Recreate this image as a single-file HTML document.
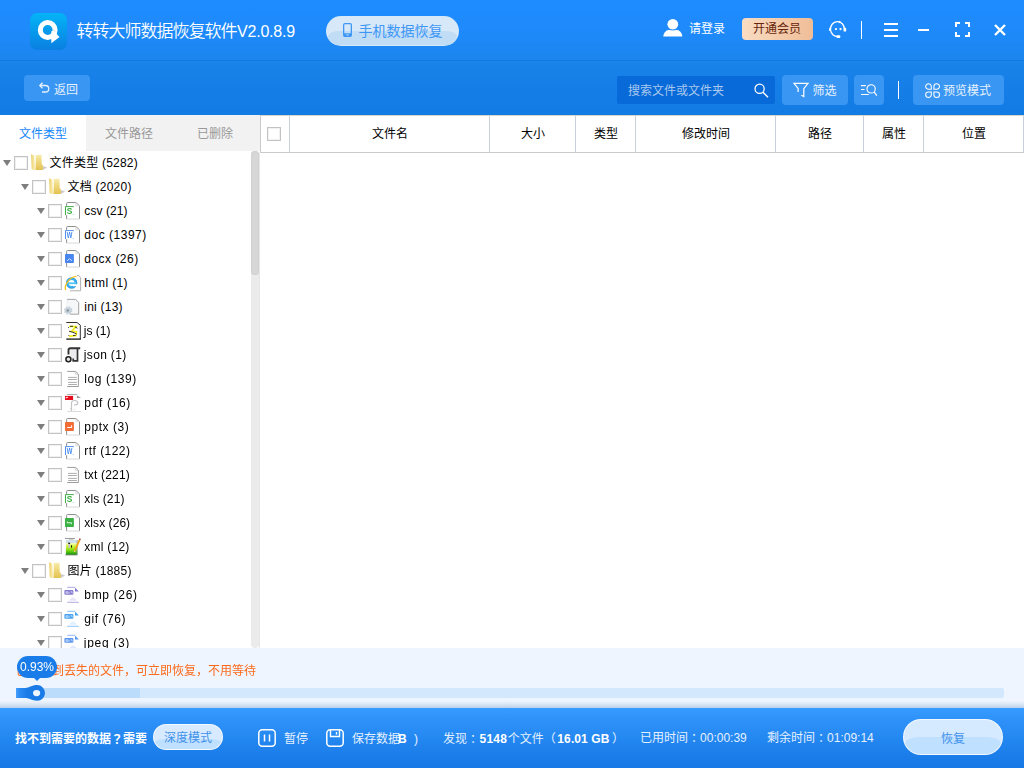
<!DOCTYPE html>
<html lang="zh-CN">
<head>
<meta charset="utf-8">
<title>转转大师数据恢复软件</title>
<style>
*{box-sizing:border-box;margin:0;padding:0}
html,body{width:1024px;height:768px;overflow:hidden;background:#fff}
body{font-family:"Liberation Sans","Noto Sans CJK SC",sans-serif;font-size:12px;color:#000;position:relative}
.abs{position:absolute}
.jp{font-family:"Liberation Sans","Noto Sans CJK JP",sans-serif;position:relative;top:1px}
svg{position:absolute;overflow:visible}
.t{position:absolute;white-space:nowrap;line-height:20px;height:20px;margin-top:1px}
#hdr{left:0;top:0;width:1024px;height:115px;background:linear-gradient(#1e8bff 0,#1e8afb 30px,#1c86ee 59px,#1a83ea 63px,#157fe7 85px,#127ce4 115px)}
#hline{left:0;top:60px;width:1024px;height:1px;background:#117be2}
#logo{left:30px;top:13px;width:37px;height:37px;border-radius:7px;background:linear-gradient(#04b4f6,#0a7fe2)}
#title{left:77px;top:20px;font-size:16px;color:#fff;line-height:22px;height:22px}
#pill{left:326px;top:16px;width:133px;height:30px;border-radius:15px;background:#d7e8f8;overflow:hidden}
#pill i{position:absolute;left:2px;top:15px;width:129px;height:14px;border-radius:14px 14px 12px 12px/8px 8px 12px 12px;background:#c1ddf6}
#pilltx{left:358.500px;top:20px;font-size:14px;color:#3f97f5}
#login{left:689px;top:18px;color:#fff}
#vip{left:742px;top:18px;width:71px;height:22px;border-radius:4px;background:linear-gradient(90deg,#f8dcc2,#f0bd98);color:#66240c;text-align:center;line-height:23px;padding-right:1px}
.sep{position:absolute;width:1px;background:#fff}
.btn{position:absolute;background:#3a96f3;border-radius:4px;height:30px;top:75px}
.btn .t{color:#e6f1fd;top:5px}
#search{left:617px;top:76px;width:158px;height:28px;background:#0869d8;border-radius:2px}
#search .t{left:11px;top:4px;color:#a8c8ee}
#tabs{left:0;top:115px;width:260px;height:36px;background:#f2f2f2}
#tab1{left:0;top:115px;width:86px;height:36px;background:#fff}
.tab{top:123px;width:86px;text-align:center;color:#999}
#thead{left:260px;top:115px;width:764px;height:38px;border-left:1px solid #cacaca;border-bottom:1px solid #cacaca;box-shadow:inset 0 1px 0 #d8d4ce}
.th{position:absolute;top:0;height:37px;border-right:1px solid #c8d0dc;text-align:center;line-height:39px;font-size:12px;color:#000;text-indent:1px}
.cb{position:absolute;width:14px;height:14px;border:1px solid #c3c3c3;background:#fff;box-shadow:inset 0 0 0 1px #f0f0f0}
#sbt{left:251px;top:151px;width:8px;height:497px;background:#ebebeb;border-radius:4px}
#vline{left:259px;top:153px;width:1px;height:495px;background:#e6e6e6}
#sbh{left:251px;top:151px;width:8px;height:124px;background:#d7d7d7;border-radius:4px;box-shadow:inset 0 0 0 1px #d2d2d2}
#tree{left:0;top:150px;width:250px;height:498px;overflow:hidden}
.row{position:absolute;left:0;height:24px;width:250px}
.row .ar{position:absolute;top:10px;width:0;height:0;border-left:4.500px solid transparent;border-right:4.500px solid transparent;border-top:6px solid #7e7e7e}
.row .cb{top:6px}
.row svg{top:4px}
.row .tx{position:absolute;top:3px;line-height:20px;white-space:nowrap;font-size:12px}
#info{left:0;top:648px;width:1024px;height:60px;background:#eef5fe}
#shadow{left:0;top:701px;width:1024px;height:7px;background:linear-gradient(rgba(100,140,190,0),rgba(100,140,190,.12) 40%,rgba(100,140,190,.36))}
#foot{left:0;top:708px;width:1024px;height:60px;background:linear-gradient(#379cff 0,#2d91f9 12px,#2488f1 30px,#1b7de9 48px,#1678e5 60px)}
#foot .t{color:#e4f0ff}
#foot b{color:#fff}
#msg{left:16px;top:660px;color:#fb6a1c}
#pbar{left:16px;top:688px;width:988px;height:10px;background:#d4e8fd;border-radius:0 2px 2px 0}
#pbar2{left:16px;top:688px;width:124px;height:10px;background:#bcdcfb}
#pbar3{left:16px;top:688px;width:22px;height:10px;background:linear-gradient(90deg,#2f8ef6,#1a78e4)}
#knob{left:28px;top:685px;width:17px;height:16px;border-radius:50%;background:#1a7ae6}
#knob i{position:absolute;left:5px;top:5px;width:6.500px;height:5.600px;border-radius:50%;background:#eef5fe}
#tip{left:17px;top:656px;width:40px;height:22px;border-radius:11px;background:#1a7ce8;color:#fff;text-align:center;line-height:22px}
#tipar{left:33.500px;top:677.500px;width:0;height:0;border-left:3.500px solid transparent;border-right:3.500px solid transparent;border-top:3.500px solid #1a7ce8}
#deep{left:153px;top:724px;width:70px;height:26px;border-radius:13px;background:#d8eaff;overflow:hidden;text-align:center;line-height:26px;border:1px solid rgba(255,255,255,.75)}
#rec{left:903px;top:719px;width:100px;height:36px;border-radius:18px;background:#d6eaff;overflow:hidden;border:1px solid rgba(255,255,255,.7)}
#rec i,#deep i{position:absolute;left:1px;right:1px;top:17px;bottom:0;border-radius:24px 24px 17px 17px/11px 11px 17px 17px;background:#bfe0ff}
#deep i{top:14px;left:0;right:0;border-radius:26px 26px 13px 13px/10px 10px 13px 13px}
#rec span,#deep span{position:absolute;left:0;right:0;top:0;color:#3f92ea}
#rec span{line-height:38px;text-align:center}
</style>
</head>
<body>

<div id="hdr" class="abs"></div>
<div id="hline" class="abs"></div>
<div id="logo" class="abs"><svg width="37" height="37" viewBox="0 0 37 37" style="left:0;top:0"><circle cx="17.700" cy="17" r="7.400" fill="none" stroke="#fff" stroke-width="5"/><path d="M21.300 18.200l2.200-.4 6 6.200-8.200 6.200z" fill="#fff"/><path d="M23.200 15.500l3.300 4.300-3-1.800z" fill="#cfd6dc" opacity=".7"/></svg></div>
<div id="title" class="t"><span style="font-size:17px;letter-spacing:-1px;font-weight:350;margin-left:-.5px">转转大师数据恢复软件</span><span style="margin-left:.5px;letter-spacing:-.2px">V2.0.8.9</span></div>
<div id="pill" class="abs"><i></i></div>
<svg width="9" height="14" viewBox="0 0 9 14" style="left:343.300px;top:23px"><rect x="0.650" y="0.650" width="7.700" height="12.700" rx="1.300" fill="none" stroke="#3f97f5" stroke-width="1.300"/><rect x="0.800" y="10.300" width="7.400" height="3" fill="#3f97f5"/><rect x="3.500" y="11.400" width="2" height="1" fill="#d9e8f8"/></svg>
<div id="pilltx" class="t">手机数据恢复</div>
<svg width="20" height="18" viewBox="0 0 20 18" style="left:662.700px;top:18.700px"><circle cx="9.800" cy="5.300" r="5.400" fill="#fff"/><path d="M0.200 17.400c.3-3.600 2.600-6 5.600-6.600h8c3 .6 5.300 3 5.600 6.600z" fill="#fff"/><path d="M4.500 10.300q5.300 1.400 10.600 0" stroke="#2088fe" stroke-width=".9" fill="none"/></svg>
<div id="login" class="t">请登录</div>
<div id="vip" class="abs">开通会员</div>
<svg width="19" height="19" viewBox="0 0 19 19" style="left:828px;top:20px"><path d="M16.450 9.050A7 7.400 0 1 0 10.500 16.370" fill="none" stroke="#fff" stroke-width="1.350"/><path d="M11 2.900L12.100 1.200" stroke="#fff" stroke-width="1.300"/><circle cx="7.960" cy="9.050" r="1.150" fill="#fff"/><circle cx="12.500" cy="9.050" r="1.150" fill="#fff"/><rect x="15.500" y="7.750" width="2.700" height="3.800" rx=".9" fill="#fff"/><rect x="8.600" y="15.250" width="3.700" height="2.750" rx=".8" fill="#fff"/><rect x="1.100" y="8.100" width="1.500" height="3" rx=".6" fill="#fff"/></svg>
<div class="sep" style="left:861px;top:21px;height:18px"></div>
<svg width="14" height="14" viewBox="0 0 14 14" style="left:884px;top:23px"><path d="M0 1h14M0 7h14M0 13h14" stroke="#fff" stroke-width="2"/></svg>
<div class="abs" style="left:918px;top:29px;width:11px;height:2px;background:#fff"></div>
<svg width="15" height="15" viewBox="0 0 15 15" style="left:955px;top:22px"><path d="M1 5V1h4M10 1h4v4M14 10v4h-4M5 14H1v-4" fill="none" stroke="#fff" stroke-width="2"/></svg>
<svg width="12" height="12" viewBox="0 0 12 12" style="left:994px;top:24px"><path d="M1 1l10 10M11 1L1 11" stroke="#fff" stroke-width="2.400"/></svg>


<div class="btn" style="left:24px;top:75px;width:66px;height:26px"><svg width="11" height="11" viewBox="0 0 11 11" style="left:15px;top:7px"><path d="M1 3.500h5.500a3.200 3.200 0 0 1 0 6.500H3" fill="none" stroke="#e6f1fd" stroke-width="1.300"/><path d="M3.500 0.800L0.800 3.500l2.700 2.700" fill="none" stroke="#e6f1fd" stroke-width="1.300"/></svg><div class="t" style="left:30px;top:4px">返回</div></div>
<div id="search" class="abs"><div class="t">搜索文件或文件夹</div><svg width="15" height="15" viewBox="0 0 15 15" style="left:136.500px;top:6.500px"><circle cx="5.600" cy="5.800" r="4.600" fill="none" stroke="#fff" stroke-width="1.250"/><path d="M9 9.200l5 5" stroke="#fff" stroke-width="1.400"/></svg></div>
<div class="btn" style="left:782px;width:66px"><svg width="16" height="15" viewBox="0 0 16 15" style="left:11px;top:7px"><path d="M5.100 9.900V6.400L1 1.300h14L10.800 6.700v7.900L8.300 13.200" fill="none" stroke="#fff" stroke-width="1.200" stroke-linejoin="miter"/></svg><div class="t" style="left:30.500px">筛选</div></div>
<div class="btn" style="left:854px;width:30px"><svg width="17" height="13" viewBox="0 0 17 13" style="left:7px;top:9px"><path d="M0 1.600h4.800M0 5.500h3.500M0 10.500h7.800" stroke="#fff" stroke-width="1.100"/><circle cx="10.100" cy="4.900" r="4.150" fill="none" stroke="#fff" stroke-width="1.100"/><path d="M13 7.900l2.900 3.700" stroke="#fff" stroke-width="1.200"/></svg></div>
<div class="sep" style="left:898px;top:81px;height:18px"></div>
<div class="btn" style="left:913px;width:91px"><svg width="15" height="15" viewBox="0 0 15 15" style="left:11.700px;top:8px"><g fill="none" stroke="#fff" stroke-width="1.050"><path d="M6.300 6.300H3.500A2.800 2.800 0 1 1 6.300 3.500z"/><path d="M8.900 6.300h2.800A2.800 2.800 0 1 0 8.900 3.500z"/><path d="M6.300 8.900H3.500A2.800 2.800 0 1 0 6.300 11.700z"/><path d="M8.900 8.900h2.800A2.800 2.800 0 1 1 8.900 11.700z"/></g></svg><div class="t" style="left:30px">预览模式</div></div>


<div id="tabs" class="abs"></div>
<div id="tab1" class="abs"></div>
<div class="t tab" style="left:0;color:#1787fb">文件类型</div>
<div class="t tab" style="left:86px">文件路径</div>
<div class="t tab" style="left:172px">已删除</div>
<div id="thead" class="abs"><div class="th" style="left:0px;width:29px"></div><div class="th" style="left:29px;width:200px">文件名</div><div class="th" style="left:229px;width:86px">大小</div><div class="th" style="left:315px;width:60px">类型</div><div class="th" style="left:375px;width:140px">修改时间</div><div class="th" style="left:515px;width:88px">路径</div><div class="th" style="left:603px;width:60px">属性</div><div class="th" style="left:663px;width:100px">位置</div><span class="cb" style="left:6px;top:12px"></span></div>
<div id="tree" class="abs">
<div class="row" style="top:0px"><span class="ar" style="left:3px"></span><span class="cb" style="left:14px"></span><svg width="18" height="18" viewBox="0 0 18 18" style="left:30px"><defs><linearGradient id="fa0" x1="0" y1="0" x2="1" y2="0"><stop offset="0" stop-color="#ebd070"/><stop offset=".6" stop-color="#f6e59a"/><stop offset="1" stop-color="#fdf6d2"/></linearGradient><linearGradient id="fb0" x1="0" y1="0" x2="0" y2="1"><stop offset="0" stop-color="#f7ecae"/><stop offset=".45" stop-color="#efd87c"/><stop offset="1" stop-color="#e3c252"/></linearGradient></defs><g transform="translate(0 -.5) scale(1 1.070)"><path d="M12.800 11.600L17.200 13.200 12.800 15.400z" fill="#808080" opacity=".4"/><path d="M5.300 1.700Q8.500.800 11.500 1.200L11.800 10.400H12.900V15.400H5.300z" fill="url(#fb0)"/><path d="M4 2.200L5.600 1.900V14.500z" fill="#fffef6"/><path d="M1 .400L4.100 2.200 5.500 16 1.700 14.800z" fill="url(#fa0)"/></g></svg><span class="tx" style="left:49.5px;letter-spacing:0.22px">文件类型 (5282)</span></div>
<div class="row" style="top:24px"><span class="ar" style="left:21px"></span><span class="cb" style="left:32px"></span><svg width="18" height="18" viewBox="0 0 18 18" style="left:48px"><defs><linearGradient id="fa1" x1="0" y1="0" x2="1" y2="0"><stop offset="0" stop-color="#ebd070"/><stop offset=".6" stop-color="#f6e59a"/><stop offset="1" stop-color="#fdf6d2"/></linearGradient><linearGradient id="fb1" x1="0" y1="0" x2="0" y2="1"><stop offset="0" stop-color="#f7ecae"/><stop offset=".45" stop-color="#efd87c"/><stop offset="1" stop-color="#e3c252"/></linearGradient></defs><g transform="translate(0 -.5) scale(1 1.070)"><path d="M12.800 11.600L17.200 13.200 12.800 15.400z" fill="#808080" opacity=".4"/><path d="M5.300 1.700Q8.500.800 11.500 1.200L11.800 10.400H12.900V15.400H5.300z" fill="url(#fb1)"/><path d="M4 2.200L5.600 1.900V14.500z" fill="#fffef6"/><path d="M1 .400L4.100 2.200 5.500 16 1.700 14.800z" fill="url(#fa1)"/></g></svg><span class="tx" style="left:67.5px;letter-spacing:0.24px">文档 (2020)</span></div>
<div class="row" style="top:48px"><span class="ar" style="left:37px"></span><span class="cb" style="left:48px"></span><svg width="18" height="18" viewBox="0 0 18 18" style="left:64px;will-change:transform"><path d="M2.600 16.900V1.500Q2.600.500 3.600.500H11.800L15.500 3.800V16.900" fill="#fff" stroke="#8e8e8e" stroke-width="1" stroke-linejoin="round"/><path d="M2.600 17.100H15.500" stroke="#d0d0d0" stroke-width=".8"/><path d="M11.800.700V3.800H15.300" fill="none" stroke="#d6d6d6" stroke-width=".8"/><rect x="1" y="4" width="9" height="9.200" fill="#fff"/><path d="M1.500 13V4.600H9.800" fill="none" stroke="#35ad3e" stroke-width=".95"/><text x="2.800" y="12" font-size="9" font-weight="bold" fill="#35ad3e" textLength="5.600" lengthAdjust="spacingAndGlyphs" font-family="Liberation Sans,sans-serif">S</text><rect x="8.800" y="12" width=".8" height=".8" fill="#35ad3e" opacity=".7"/></svg><span class="tx" style="left:84.3px;letter-spacing:0.09px">csv (21)</span></div>
<div class="row" style="top:72px"><span class="ar" style="left:37px"></span><span class="cb" style="left:48px"></span><svg width="18" height="18" viewBox="0 0 18 18" style="left:64px;will-change:transform"><path d="M2.600 16.900V1.500Q2.600.500 3.600.500H11.800L15.500 3.800V16.900" fill="#fff" stroke="#8e8e8e" stroke-width="1" stroke-linejoin="round"/><path d="M2.600 17.100H15.500" stroke="#d0d0d0" stroke-width=".8"/><path d="M11.800.700V3.800H15.300" fill="none" stroke="#d6d6d6" stroke-width=".8"/><rect x="1" y="4" width="9" height="9.200" fill="#fff"/><path d="M1.500 13V4.600H9.800" fill="none" stroke="#468af0" stroke-width=".95"/><text x="2.800" y="12" font-size="8.6" font-weight="bold" fill="#468af0" textLength="5.600" lengthAdjust="spacingAndGlyphs" font-family="Liberation Sans,sans-serif">W</text><rect x="8.800" y="12" width=".8" height=".8" fill="#468af0" opacity=".7"/></svg><span class="tx" style="left:84.3px;letter-spacing:0.51px">doc (1397)</span></div>
<div class="row" style="top:96px"><span class="ar" style="left:37px"></span><span class="cb" style="left:48px"></span><svg width="18" height="18" viewBox="0 0 18 18" style="left:64px;will-change:transform"><path d="M2.600 16.900V1.500Q2.600.500 3.600.500H11.800L15.500 3.800V16.900" fill="#fff" stroke="#8e8e8e" stroke-width="1" stroke-linejoin="round"/><path d="M2.600 17.100H15.500" stroke="#d0d0d0" stroke-width=".8"/><path d="M11.800.700V3.800H15.300" fill="none" stroke="#d6d6d6" stroke-width=".8"/><rect x="1" y="4" width="8.900" height="8.900" rx=".6" fill="#4a86f0"/><path d="M3.200 10.700L5.500 8.800 7.900 10.700" stroke="#e6eefc" stroke-width=".9" fill="none"/></svg><span class="tx" style="left:84.3px;letter-spacing:0.48px">docx (26)</span></div>
<div class="row" style="top:120px"><span class="ar" style="left:37px"></span><span class="cb" style="left:48px"></span><svg width="18" height="18" viewBox="0 0 18 18" style="left:64px;will-change:transform"><path d="M13 1.500h1.600l2 2V16.800H6" fill="#fbfbfb" stroke="#a8a8a8" stroke-width=".9"/><circle cx="7.600" cy="9" r="4.300" fill="none" stroke="#39aef0" stroke-width="2.600"/><circle cx="7.600" cy="9" r="5.300" fill="none" stroke="#1d86d6" stroke-width=".7" opacity=".7"/><path d="M3.500 9.300H12.500" stroke="#4cc4f6" stroke-width="1.800"/><path d="M8.500 10.300H13.500V12.200H9z" fill="#fff"/><path d="M1.500 15.500C.300 11 5 3.300 12 2.300" stroke="#f8c21a" stroke-width="1.300" fill="none" stroke-linecap="round"/></svg><span class="tx" style="left:84.3px;letter-spacing:0.37px">html (1)</span></div>
<div class="row" style="top:144px"><span class="ar" style="left:37px"></span><span class="cb" style="left:48px"></span><svg width="18" height="18" viewBox="0 0 18 18" style="left:64px;will-change:transform"><path d="M3 1.400H11.500L14.700 4.300V16.200H6" fill="#f5f7f9" stroke="#9c9c9c" stroke-width=".9"/><path d="M3 1.800V9" stroke="#e2e4e6" stroke-width=".8"/><circle cx="4.200" cy="12.500" r="3.300" fill="#ccd6de" stroke="#c4d0da" stroke-width="1.800" stroke-dasharray="1.500 1.100"/><circle cx="4.200" cy="12.500" r="2.800" fill="#c8d2dc"/><circle cx="3.800" cy="12.500" r="1.300" fill="#8e98a2"/></svg><span class="tx" style="left:84.3px;letter-spacing:0.23px">ini (13)</span></div>
<div class="row" style="top:168px"><span class="ar" style="left:37px"></span><span class="cb" style="left:48px"></span><svg width="18" height="18" viewBox="0 0 18 18" style="left:64px;will-change:transform"><path d="M2.300.500H13L16.300 3.200V17.100" fill="#fff" stroke="#1a1a1a" stroke-width=".9"/><path d="M2.300 17.100H16.800" stroke="#000" stroke-width="1.200"/><path d="M5 4.500H12L7.500 9.500H12.500L12 13.500 5 14.300" fill="none" stroke="#f4ee1c" stroke-width="1.700"/><path d="M6 4.300H9M11 4.800L13.500 6.300M5 9.200L9 10.300 12.500 12M9 13.500H11.500M4.500 5.200v.8M4.800 13v.8" stroke="#222" stroke-width=".9" fill="none"/></svg><span class="tx" style="left:83.8px;letter-spacing:0.0px">js (1)</span></div>
<div class="row" style="top:192px"><span class="ar" style="left:37px"></span><span class="cb" style="left:48px"></span><svg width="18" height="18" viewBox="0 0 18 18" style="left:64px;will-change:transform"><rect x="6.300" y="3" width="6.500" height="11.500" fill="#ececf0"/><path d="M4.500 8.500V4Q4.500 2.200 6.500 2.200H16.200" fill="none" stroke="#333" stroke-width="1.900"/><path d="M13.500 2.900V14.800H9.200V12.500" fill="none" stroke="#333" stroke-width="1.700"/><circle cx="4.400" cy="13.200" r="2.500" fill="#e8e8e8" stroke="#222" stroke-width="1.500"/></svg><span class="tx" style="left:83.8px;letter-spacing:0.34px">json (1)</span></div>
<div class="row" style="top:216px"><span class="ar" style="left:37px"></span><span class="cb" style="left:48px"></span><svg width="18" height="18" viewBox="0 0 18 18" style="left:64px;will-change:transform"><path d="M3.200 1.400H11.600L14.400 4V16.500H3.200" fill="#fff" stroke="#929292" stroke-width=".9"/><path d="M11.400 1.600V4.200H14.200" fill="none" stroke="#c8c8c8" stroke-width=".8"/><path d="M4.100 7.400H12.900M4.100 9.500H12.900M4.100 12.400H12.900M4.100 14.500H12.900" stroke="#a4a4a4" stroke-width=".9"/></svg><span class="tx" style="left:84.3px;letter-spacing:0.57px">log (139)</span></div>
<div class="row" style="top:240px"><span class="ar" style="left:37px"></span><span class="cb" style="left:48px"></span><svg width="18" height="18" viewBox="0 0 18 18" style="left:64px;will-change:transform"><path d="M3.200.400H12.900" stroke="#8a8a8a" stroke-width=".8"/><path d="M12.900 1.200L17 3.900H12.900z" fill="#9a9a9a"/><path d="M3.200 17.500H17" stroke="#cfcfcf" stroke-width=".8"/><path d="M7.500 17V9Q7.500 6.500 10.500 6.500 13.800 6.500 13.800 9 13.800 11 10 11M6.300 14.500H7.500" fill="none" stroke="#c4c4c8" stroke-width="1.200"/><rect x="10.300" y="15.200" width=".8" height=".8" fill="#bbb"/><rect x="1" y="1.900" width="8.100" height="4.100" fill="#e60f1e"/><path d="M2.200 4.300V3.300H4" stroke="#fff" stroke-width=".9" fill="none"/></svg><span class="tx" style="left:84.3px;letter-spacing:0.67px">pdf (16)</span></div>
<div class="row" style="top:264px"><span class="ar" style="left:37px"></span><span class="cb" style="left:48px"></span><svg width="18" height="18" viewBox="0 0 18 18" style="left:64px;will-change:transform"><path d="M2.600 16.900V1.500Q2.600.500 3.600.500H11.800L15.500 3.800V16.900" fill="#fff" stroke="#8e8e8e" stroke-width="1" stroke-linejoin="round"/><path d="M2.600 17.100H15.500" stroke="#d0d0d0" stroke-width=".8"/><path d="M11.800.700V3.800H15.300" fill="none" stroke="#d6d6d6" stroke-width=".8"/><rect x="1" y="4" width="8.900" height="8.900" rx=".6" fill="#f26d36"/><path d="M3.200 9.500H7.600V7.300" stroke="#fff" stroke-width="1" fill="none"/></svg><span class="tx" style="left:84.3px;letter-spacing:0.53px">pptx (3)</span></div>
<div class="row" style="top:288px"><span class="ar" style="left:37px"></span><span class="cb" style="left:48px"></span><svg width="18" height="18" viewBox="0 0 18 18" style="left:64px;will-change:transform"><path d="M2.600 16.900V1.500Q2.600.500 3.600.500H11.800L15.500 3.800V16.900" fill="#fff" stroke="#8e8e8e" stroke-width="1" stroke-linejoin="round"/><path d="M2.600 17.100H15.500" stroke="#d0d0d0" stroke-width=".8"/><path d="M11.800.700V3.800H15.300" fill="none" stroke="#d6d6d6" stroke-width=".8"/><rect x="1" y="4" width="9" height="9.200" fill="#fff"/><path d="M1.500 13V4.600H9.800" fill="none" stroke="#468af0" stroke-width=".95"/><text x="2.800" y="12" font-size="8.6" font-weight="bold" fill="#468af0" textLength="5.600" lengthAdjust="spacingAndGlyphs" font-family="Liberation Sans,sans-serif">W</text><rect x="8.800" y="12" width=".8" height=".8" fill="#468af0" opacity=".7"/></svg><span class="tx" style="left:84.3px;letter-spacing:0.46px">rtf (122)</span></div>
<div class="row" style="top:312px"><span class="ar" style="left:37px"></span><span class="cb" style="left:48px"></span><svg width="18" height="18" viewBox="0 0 18 18" style="left:64px;will-change:transform"><path d="M3.200 1.400H11.600L14.400 4V16.500H3.200" fill="#fff" stroke="#929292" stroke-width=".9"/><path d="M11.400 1.600V4.200H14.200" fill="none" stroke="#c8c8c8" stroke-width=".8"/><path d="M4.100 7.400H12.900M4.100 9.500H12.900M4.100 12.400H12.900M4.100 14.500H12.900" stroke="#a4a4a4" stroke-width=".9"/></svg><span class="tx" style="left:84.3px;letter-spacing:0.19px">txt (221)</span></div>
<div class="row" style="top:336px"><span class="ar" style="left:37px"></span><span class="cb" style="left:48px"></span><svg width="18" height="18" viewBox="0 0 18 18" style="left:64px;will-change:transform"><path d="M2.600 16.900V1.500Q2.600.500 3.600.500H11.800L15.500 3.800V16.900" fill="#fff" stroke="#8e8e8e" stroke-width="1" stroke-linejoin="round"/><path d="M2.600 17.100H15.500" stroke="#d0d0d0" stroke-width=".8"/><path d="M11.800.700V3.800H15.300" fill="none" stroke="#d6d6d6" stroke-width=".8"/><rect x="1" y="4" width="9" height="9.200" fill="#fff"/><path d="M1.500 13V4.600H9.800" fill="none" stroke="#35ad3e" stroke-width=".95"/><text x="2.800" y="12" font-size="9" font-weight="bold" fill="#35ad3e" textLength="5.600" lengthAdjust="spacingAndGlyphs" font-family="Liberation Sans,sans-serif">S</text><rect x="8.800" y="12" width=".8" height=".8" fill="#35ad3e" opacity=".7"/></svg><span class="tx" style="left:84.3px;letter-spacing:0.11px">xls (21)</span></div>
<div class="row" style="top:360px"><span class="ar" style="left:37px"></span><span class="cb" style="left:48px"></span><svg width="18" height="18" viewBox="0 0 18 18" style="left:64px;will-change:transform"><path d="M2.600 16.900V1.500Q2.600.500 3.600.500H11.800L15.500 3.800V16.900" fill="#fff" stroke="#8e8e8e" stroke-width="1" stroke-linejoin="round"/><path d="M2.600 17.100H15.500" stroke="#d0d0d0" stroke-width=".8"/><path d="M11.800.700V3.800H15.300" fill="none" stroke="#d6d6d6" stroke-width=".8"/><rect x="1" y="4" width="8.900" height="8.900" rx=".6" fill="#3bb144"/><path d="M3.300 7.600V8.800H7.400V10.200" stroke="#e8f8ea" stroke-width="1" fill="none"/></svg><span class="tx" style="left:84.3px;letter-spacing:0.06px">xlsx (26)</span></div>
<div class="row" style="top:384px"><span class="ar" style="left:37px"></span><span class="cb" style="left:48px"></span><svg width="18" height="18" viewBox="0 0 18 18" style="left:64px;will-change:transform"><defs><linearGradient id="xg" x1="0" y1="0" x2="0" y2="1"><stop offset="0" stop-color="#f4fbd0"/><stop offset=".25" stop-color="#d4f43a"/><stop offset=".6" stop-color="#7fdc10"/><stop offset="1" stop-color="#0a8c0c"/></linearGradient></defs><path d="M1 .450H11" stroke="#7a7a7a" stroke-width=".8"/><path d="M5 1.300H9.500" stroke="#b0b0b0" stroke-width=".8"/><rect x="1.900" y="2" width="11.300" height="3.200" fill="#cfe0e8"/><rect x="1.900" y="5" width="11.300" height="12" fill="url(#xg)"/><path d="M13.200 2V17H1.200" fill="none" stroke="#8a8a8a" stroke-width=".8"/><rect x="4.400" y="5.500" width="1.600" height="4.500" fill="#c8bcd8"/><rect x="4.200" y="4.700" width="1.900" height="1.200" fill="#111"/><rect x="7" y="7.300" width="1" height="2.300" fill="#111"/><path d="M15.600 1.800L10.800 12.800" stroke="#f2a410" stroke-width="1.700"/><path d="M16.200.600L15.600 1.800" stroke="#a03040" stroke-width="1.500"/><path d="M10.800 12.800L10.400 14" stroke="#e8d0b0" stroke-width="1.300"/></svg><span class="tx" style="left:84.3px;letter-spacing:0.24px">xml (12)</span></div>
<div class="row" style="top:408px"><span class="ar" style="left:21px"></span><span class="cb" style="left:32px"></span><svg width="18" height="18" viewBox="0 0 18 18" style="left:48px"><defs><linearGradient id="fa17" x1="0" y1="0" x2="1" y2="0"><stop offset="0" stop-color="#ebd070"/><stop offset=".6" stop-color="#f6e59a"/><stop offset="1" stop-color="#fdf6d2"/></linearGradient><linearGradient id="fb17" x1="0" y1="0" x2="0" y2="1"><stop offset="0" stop-color="#f7ecae"/><stop offset=".45" stop-color="#efd87c"/><stop offset="1" stop-color="#e3c252"/></linearGradient></defs><g transform="translate(0 -.5) scale(1 1.070)"><path d="M12.800 11.600L17.200 13.200 12.800 15.400z" fill="#808080" opacity=".4"/><path d="M5.300 1.700Q8.500.800 11.500 1.200L11.800 10.400H12.900V15.400H5.300z" fill="url(#fb17)"/><path d="M4 2.200L5.600 1.900V14.500z" fill="#fffef6"/><path d="M1 .400L4.100 2.200 5.500 16 1.700 14.800z" fill="url(#fa17)"/></g></svg><span class="tx" style="left:67.5px;letter-spacing:0.24px">图片 (1885)</span></div>
<div class="row" style="top:432px"><span class="ar" style="left:37px"></span><span class="cb" style="left:48px"></span><svg width="18" height="18" viewBox="0 0 18 18" style="left:64px;will-change:transform"><path d="M3.200 1.300H11" stroke="#857cd0" stroke-width=".9" opacity=".75"/><path d="M11 1.600L14.800 5.600H11z" fill="#857cd0"/><path d="M3.200 16.300H14.800" stroke="#857cd0" stroke-width=".9" opacity=".7"/><path d="M5 14.800q0-1.800 1.800-1.800.6-1.400 2.200-1.400 1.800 0 2.300 1.500 1.600.2 1.600 1.700z" fill="#e6e4fa"/><rect x=".4" y="4.100" width="9" height="4.700" rx="1" fill="#857cd0"/><path d="M2 7.300h2.200v-1.500h-2.200zM5 7.300l.9-.8M6.500 5.800h1.600v1.400" stroke="#fff" stroke-width=".7" fill="none" opacity=".85"/></svg><span class="tx" style="left:84.3px;letter-spacing:0.67px">bmp (26)</span></div>
<div class="row" style="top:456px"><span class="ar" style="left:37px"></span><span class="cb" style="left:48px"></span><svg width="18" height="18" viewBox="0 0 18 18" style="left:64px;will-change:transform"><path d="M3.200 1.300H11" stroke="#48a4f2" stroke-width=".9" opacity=".75"/><path d="M11 1.600L14.800 5.600H11z" fill="#48a4f2"/><path d="M3.200 16.300H14.800" stroke="#48a4f2" stroke-width=".9" opacity=".7"/><path d="M5 14.800q0-1.800 1.800-1.800.6-1.400 2.200-1.400 1.800 0 2.300 1.500 1.600.2 1.600 1.700z" fill="#dff0fe"/><rect x=".4" y="4.100" width="9" height="4.700" rx="1" fill="#48a4f2"/><path d="M2 7.300h2.200v-1.500h-2.200zM5 7.300l.9-.8M6.500 5.800h1.600v1.400" stroke="#fff" stroke-width=".7" fill="none" opacity=".85"/></svg><span class="tx" style="left:84.3px;letter-spacing:0.54px">gif (76)</span></div>
<div class="row" style="top:480px"><span class="ar" style="left:37px"></span><span class="cb" style="left:48px"></span><svg width="18" height="18" viewBox="0 0 18 18" style="left:64px;will-change:transform"><path d="M3.200 1.300H11" stroke="#5a96f0" stroke-width=".9" opacity=".75"/><path d="M11 1.600L14.800 5.600H11z" fill="#5a96f0"/><path d="M3.200 16.300H14.800" stroke="#5a96f0" stroke-width=".9" opacity=".7"/><path d="M5 14.800q0-1.800 1.800-1.800.6-1.400 2.200-1.400 1.800 0 2.300 1.500 1.600.2 1.600 1.700z" fill="#e0eafc"/><rect x=".4" y="4.100" width="9" height="4.700" rx="1" fill="#5a96f0"/><path d="M2 7.300h2.200v-1.500h-2.200zM5 7.300l.9-.8M6.500 5.800h1.600v1.400" stroke="#fff" stroke-width=".7" fill="none" opacity=".85"/></svg><span class="tx" style="left:83.8px;letter-spacing:0.69px">jpeg (3)</span></div>
</div>
<div id="vline" class="abs"></div>
<div id="sbt" class="abs"></div>
<div id="sbh" class="abs"></div>


<div id="info" class="abs"></div>
<div id="msg" class="t">已扫描到丢失的文件，可立即恢复，不用等待</div>
<div id="pbar" class="abs"></div>
<div id="pbar2" class="abs"></div>
<svg width="32" height="18" viewBox="0 0 32 18" style="left:16px;top:684px"><defs><linearGradient id="kg" x1="0" y1="0" x2="1" y2="0"><stop offset="0" stop-color="#4a9ffa"/><stop offset=".12" stop-color="#2d8cf4"/><stop offset=".4" stop-color="#1a7ae6"/><stop offset="1" stop-color="#1a7ae6"/></linearGradient></defs><path d="M0 4H9.500C13 4 15.500 1.100 21.300 1.100A7.700 7.850 0 1 1 21.300 16.800C15.500 16.800 13 14.100 9.500 14.100H0z" fill="url(#kg)"/><ellipse cx="20.600" cy="9.100" rx="3.600" ry="3.100" fill="#eef5fe"/></svg>
<div id="tip" class="abs">0.93%</div>
<div id="tipar" class="abs"></div>
<div id="shadow" class="abs"></div>
<div id="foot" class="abs">
<div class="t" style="left:15px;top:20px;font-weight:bold;color:#fff">找不到需要的数据<span class="jp" lang="ja">？</span>需要</div>
<div class="t" style="left:284px;top:20px">暂停</div>
<div class="t" style="left:352px;top:20px">保存数据</div>
<div class="t" style="left:398px;top:20px"><b>B</b></div>
<div class="t" style="left:414px;top:20px">)</div>
<div class="t" style="left:443px;top:20px">发现<span class="jp" lang="ja">：</span><b style="letter-spacing:.2px;margin-left:.5px">5148</b><span style="margin-left:.8px">个文件（</span><b style="margin-left:1.500px;letter-spacing:.1px">16.01 GB</b><span style="margin-left:2.500px">）</span></div>
<div class="t" style="left:640px;top:19px">已用时间<span class="jp" lang="ja">：</span>00:00:39</div>
<div class="t" style="left:767px;top:19px">剩余时间<span class="jp" lang="ja">：</span>01:09:14</div>
<svg width="18" height="18" viewBox="0 0 18 18" style="left:258px;top:21px"><rect x="0.800" y="0.800" width="16.400" height="16.400" rx="3.500" fill="none" stroke="#fff" stroke-width="1.500"/><path d="M6.500 5.500v7M11.500 5.500v7" stroke="#fff" stroke-width="1.500"/></svg>
<svg width="18" height="18" viewBox="0 0 18 18" style="left:326px;top:21px"><rect x="0.800" y="0.800" width="16.400" height="16.400" rx="3.500" fill="none" stroke="#fff" stroke-width="1.500"/><path d="M4.500 1v6.500h9V1" fill="none" stroke="#fff" stroke-width="1.400"/><path d="M10.500 3v2.500" stroke="#fff" stroke-width="1.400"/></svg>
</div>
<div id="deep" class="abs"><i></i><span>深度模式</span></div>
<div id="rec" class="abs"><i></i><span>恢复</span></div>

</body>
</html>
